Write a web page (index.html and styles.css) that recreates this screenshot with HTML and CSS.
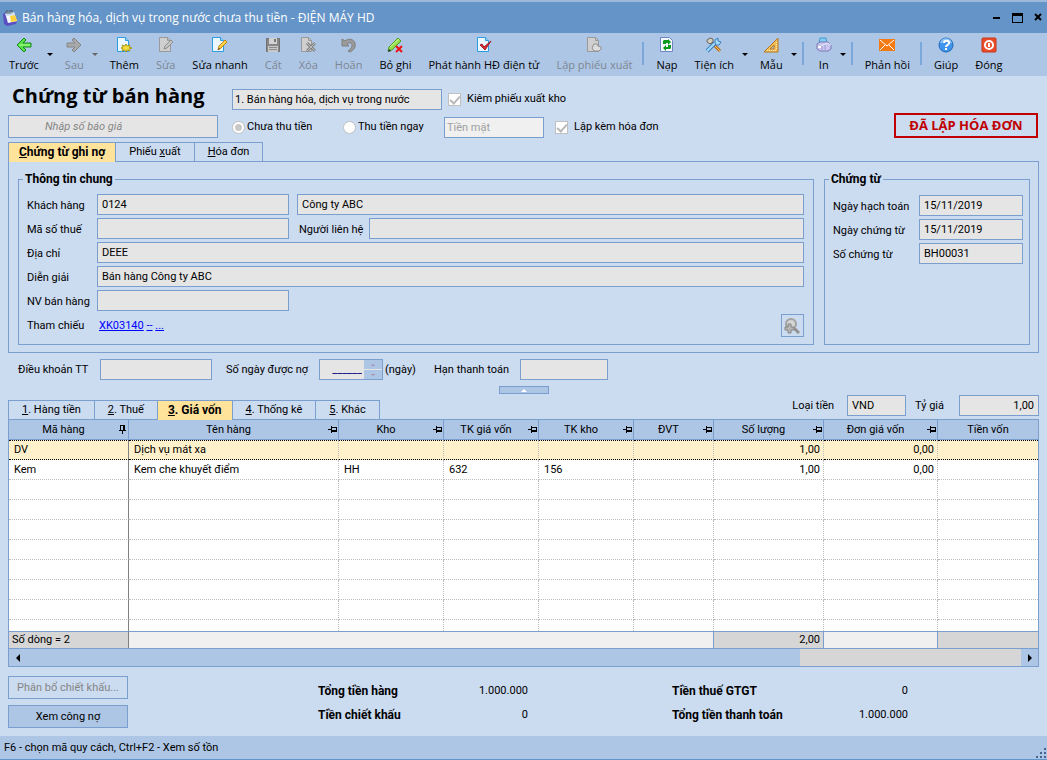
FILE: index.html
```html
<!DOCTYPE html>
<html lang="vi">
<head>
    <meta charset="UTF-8">
    <meta name="viewport" content="width=device-width, initial-scale=1.0">
    <title>Chứng từ bán hàng</title>
    <link rel="stylesheet" href="styles.css">
</head>
<body>
    <div class="top-strip"></div>

    <!-- Thanh tiêu đề -->
    <header class="titlebar">
        <svg class="app-icon" width="16" height="16" viewBox="0 0 16 16">
            <path d="M1 4l3-2 2 10 9-1-1 3-9 2-3-2z" fill="#5a4fc0"/>
            <path d="M3 3l9-1 3 9-9 2z" fill="#f4f8ff"/>
            <path d="M3 3l9-1 1 3-9 1z" fill="#c9ddf2"/>
            <path d="M8 6l5-1 2 6-6 1z" fill="#ffd23c"/>
            <path d="M4 4V1h2v3M8 4V0h2v3" fill="none" stroke="#55606e"/>
        </svg>
        <h1 class="window-title">Bán hàng hóa, dịch vụ trong nước chưa thu tiền - ĐIỆN MÁY HD</h1>
        <div class="window-buttons">
            <button type="button" aria-label="Thu nhỏ"><svg width="8" height="12" viewBox="0 0 8 12"><path d="M0 5h7v2H0z"/></svg></button>
            <button type="button" aria-label="Phóng to"><svg width="11" height="12" viewBox="0 0 11 12"><path d="M0 1h11v10H0zM1 4v6h9V4z" fill-rule="evenodd"/></svg></button>
            <button type="button" aria-label="Đóng cửa sổ"><svg width="8" height="12" viewBox="0 0 8 12"><path d="M1 2l6 6M7 2L1 8" stroke="#000" stroke-width="2"/></svg></button>
        </div>
    </header>

    <!-- Thanh công cụ -->
    <nav class="toolbar">
        <button type="button" class="tool">
            <svg width="16" height="16" viewBox="0 0 16 16"><path d="M8 1l2 2-3 3h8v4H7l3 3-2 2L1 8z" fill="#55e045" stroke="#178a1c" stroke-linejoin="round"/><path d="M3 8h11" stroke="#b7ff9c"/></svg>
            <span>Trước</span>
        </button>
        <button type="button" class="arrow" aria-label="Danh sách trước"></button>
        <button type="button" class="tool" disabled>
            <svg width="16" height="16" viewBox="0 0 16 16"><path d="M8 1L6 3l3 3H1v4h8l-3 3 2 2 7-7z" fill="#a9a9a9" stroke="#858585" stroke-linejoin="round"/></svg>
            <span>Sau</span>
        </button>
        <button type="button" class="arrow dim" aria-label="Danh sách sau"></button>
        <button type="button" class="tool">
            <svg width="16" height="16" viewBox="0 0 16 16"><path d="M1.500 .5h8l3 3v11h-11z" fill="#eaf7ff" stroke="#2c9be0"/><path d="M9.500 .5v3h3" fill="#9bd5f5" stroke="#2c9be0"/><path d="M10 7l1 2 3-1-1 2 3 1-3 1 1 2-3-1-1 2-1-2-3 1 1-2-2-1 2-1-1-2 3 1z" fill="#f1dd3c" stroke="#ac991d"/></svg>
            <span>Thêm</span>
        </button>
        <button type="button" class="tool" disabled>
            <svg width="16" height="16" viewBox="0 0 16 16"><path d="M1.500 .5h8l3 3v11h-11z" fill="#cfcfcf" stroke="#999"/><path d="M9.500 .5v3h3" fill="none" stroke="#999"/><path d="M6 12l1-3 6-6 2 2-6 6z" fill="#c4c4c4" stroke="#909090"/></svg>
            <span>Sửa</span>
        </button>
        <button type="button" class="tool">
            <svg width="16" height="16" viewBox="0 0 16 16"><path d="M.5 .5h8l3 3v11H.5z" fill="#eaf7ff" stroke="#2c9be0"/><path d="M8.500 .5v3h3" fill="#9bd5f5" stroke="#2c9be0"/><path d="M6 13l1-4 6-6 2 2-6 6z" fill="#ffd24a" stroke="#c18315"/><path d="M6 13l1-2 1 1z" fill="#333"/></svg>
            <span>Sửa nhanh</span>
        </button>
        <button type="button" class="tool" disabled>
            <svg width="16" height="16" viewBox="0 0 16 16"><path d="M1.500 1.500h13v13h-13z" fill="#878787" stroke="#707070"/><path d="M4 1h8v6H4z" fill="#d2d2d2"/><path d="M9 2h2v3H9z" fill="#777"/><path d="M3 9h10v6H3z" fill="#c8c8c8"/><path d="M4 10.500h8M4 12.500h8" stroke="#8d8d8d"/></svg>
            <span>Cất</span>
        </button>
        <button type="button" class="tool" disabled>
            <svg width="16" height="16" viewBox="0 0 16 16"><path d="M1.500 .5h7l3 3v11h-10z" fill="#cfcfcf" stroke="#999"/><path d="M8.500 .5v3h3" fill="none" stroke="#999"/><path d="M7 6l8 8M15 6l-8 8" stroke="#858585" stroke-width="3"/><path d="M7 6l8 8M15 6l-8 8" stroke="#bbb"/></svg>
            <span>Xóa</span>
        </button>
        <button type="button" class="tool" disabled>
            <svg width="16" height="16" viewBox="0 0 16 16"><path d="M1 2v7h7L6 7c2-2 5-1 5 1s-1 4-4 6l2 1c4-2 6-5 5-9S7 1 4 4z" fill="#9a9a9a" stroke="#7f7f7f"/></svg>
            <span>Hoãn</span>
        </button>
        <button type="button" class="tool">
            <svg width="16" height="16" viewBox="0 0 16 16"><path d="M1 14l1-4 9-9 3 3-9 9z" fill="#8fe04a" stroke="#4f9c20"/><path d="M3 10l9-8" stroke="#d2ff9c"/><path d="M1 15l1-3 2 2z" fill="#222"/><path d="M9 9l6 6M15 9l-6 6" stroke="#ee1111" stroke-width="2"/></svg>
            <span>Bỏ ghi</span>
        </button>
        <button type="button" class="tool">
            <svg width="16" height="16" viewBox="0 0 16 16"><path d="M1.500 .5h8l3 3v11h-11z" fill="#eaf7ff" stroke="#2c9be0"/><path d="M9.500 .5v3h3" fill="#9bd5f5" stroke="#2c9be0"/><path d="M4 8l2-1 2 3 7-6-6 9z" fill="#d92f35" stroke="#a51d28"/></svg>
            <span>Phát hành HĐ điện tử</span>
        </button>
        <button type="button" class="tool" disabled>
            <svg width="16" height="16" viewBox="0 0 16 16"><path d="M1.500 .5h8l3 3v11h-11z" fill="#cfcfcf" stroke="#999"/><path d="M9.500 .5v3h3" fill="none" stroke="#999"/><path d="M6 11l1-2 1-2h3l1 2 3 1v2l-2 2H8z" fill="#ddd" stroke="#909090"/></svg>
            <span>Lập phiếu xuất</span>
        </button>
        <span class="separator"></span>
        <button type="button" class="tool">
            <svg width="16" height="16" viewBox="0 0 16 16"><path d="M1.500 .5h9l3 3v11h-12z" fill="#f5f8ff" stroke="#6f86c4"/><path d="M4 7V4l1-1h4V2l3 3-3 3V6H7v1zM12 8v3l-1 1H7v2l-3-3 3-3v2h2V8z" fill="#0b9a1d"/></svg>
            <span>Nạp</span>
        </button>
        <button type="button" class="tool">
            <svg width="16" height="16" viewBox="0 0 16 16"><path d="M5 5l9 9" stroke="#b86b19" stroke-width="3"/><path d="M5 5l9 9" stroke="#ffc56b"/><path d="M1 14l8-8" stroke="#367ebc" stroke-width="4"/><path d="M1 14l8-8" stroke="#a5dcff" stroke-width="2"/><path d="M9 6V3l3-2v3l3 1-2 3h-3z" fill="#a5dcff" stroke="#367ebc"/><path d="M1 5V3l3-2 3 1v3L4 7z" fill="#d5cdbd" stroke="#666"/></svg>
            <span>Tiện ích</span>
        </button>
        <button type="button" class="arrow" aria-label="Chọn tiện ích"></button>
        <button type="button" class="tool">
            <svg width="16" height="16" viewBox="0 0 16 16"><path d="M15 1v14H1zM11 8v4H7z" fill="#f2bd59" fill-rule="evenodd" stroke="#b47822"/><path d="M13.500 5v8M4 13.500h9" stroke="#fff0b0" stroke-dasharray="1 1"/></svg>
            <span>Mẫu</span>
        </button>
        <button type="button" class="arrow" aria-label="Chọn mẫu"></button>
        <span class="separator"></span>
        <button type="button" class="tool">
            <svg width="16" height="16" viewBox="0 0 16 16"><path d="M3 6l1-5h6l1 5z" fill="#7fcdf2" stroke="#4a98c8"/><path d="M1 7l3-2h8l3 3v4l-3 2H4l-3-2z" fill="#c8c5ef" stroke="#7b78b5" stroke-linejoin="round"/><path d="M5 9l6-3 4 2" fill="none" stroke="#e8e6ff"/><path d="M6 9v4M9 8v5" stroke="#9f9cd2"/><path d="M2 9h3v2H2z" fill="#fff"/></svg>
            <span>In</span>
        </button>
        <button type="button" class="arrow" aria-label="Chọn cách in"></button>
        <span class="separator"></span>
        <button type="button" class="tool">
            <svg width="16" height="16" viewBox="0 0 16 16"><path d="M0 2h16v12H0z" fill="#f47a13"/><path d="M1 3l7 6 7-6M1 13l5-5M15 13l-5-5" fill="none" stroke="#fff"/></svg>
            <span>Phản hồi</span>
        </button>
        <span class="separator"></span>
        <button type="button" class="tool">
            <svg width="16" height="16" viewBox="0 0 16 16"><circle cx="8" cy="8" r="7" fill="#3f94ec" stroke="#1f68b8"/><path d="M3 6c2-5 8-5 10 0" fill="none" stroke="#8cc4ff" stroke-width="2"/><path d="M6 6c0-3 5-3 5 0 0 2-3 2-3 4" fill="none" stroke="#fff" stroke-width="2"/><path d="M7 11h2v2H7z" fill="#fff"/></svg>
            <span>Giúp</span>
        </button>
        <button type="button" class="tool">
            <svg width="16" height="16" viewBox="0 0 16 16"><rect x="1" y="1" width="14" height="14" rx="1" fill="#ea4c29" stroke="#c93718"/><circle cx="8" cy="8" r="4" fill="none" stroke="#fff" stroke-width="2"/><path d="M8 6v4" stroke="#fff" stroke-width="2"/></svg>
            <span>Đóng</span>
        </button>
    </nav>

    <main class="content">
        <!-- Đầu chứng từ -->
        <section class="doc-head">
            <div class="doc-left">
                <h2>Chứng từ bán hàng</h2>
                <input type="text" class="box quote" placeholder="Nhập số báo giá" aria-label="Số báo giá" readonly>
            </div>
            <div class="doc-options">
                <div class="option-row">
                    <input type="text" class="box kind" value="1. Bán hàng hóa, dịch vụ trong nước" aria-label="Loại chứng từ" readonly>
                    <label class="choice"><input type="checkbox" checked disabled>Kiêm phiếu xuất kho</label>
                </div>
                <div class="option-row">
                    <label class="choice pay"><input type="radio" name="pay" checked disabled>Chưa thu tiền</label>
                    <label class="choice pay"><input type="radio" name="pay" disabled>Thu tiền ngay</label>
                    <input type="text" class="box method" value="Tiền mặt" aria-label="Hình thức thanh toán" disabled>
                    <label class="choice"><input type="checkbox" checked disabled>Lập kèm hóa đơn</label>
                </div>
            </div>
            <strong class="stamp">ĐÃ LẬP HÓA ĐƠN</strong>
        </section>

        <div class="tabs" role="tablist">
            <button type="button" role="tab" class="tab active" aria-selected="true"><u>C</u>hứng từ ghi nợ</button>
            <button type="button" role="tab" class="tab">Phiếu <u>x</u>uất</button>
            <button type="button" role="tab" class="tab"><u>H</u>óa đơn</button>
        </div>

        <section class="panel">
            <fieldset class="general">
                <legend>Thông tin chung</legend>
                <div class="field-row">
                    <label for="customer">Khách hàng</label>
                    <input type="text" id="customer" class="box short" value="0124" readonly>
                    <input type="text" class="box grow" value="Công ty ABC" aria-label="Tên khách hàng" readonly>
                </div>
                <div class="field-row">
                    <label for="tax">Mã số thuế</label>
                    <input type="text" id="tax" class="box short" readonly>
                    <label for="contact" class="contact">Người liên hệ</label>
                    <input type="text" id="contact" class="box grow" readonly>
                </div>
                <div class="field-row">
                    <label for="address">Địa chỉ</label>
                    <input type="text" id="address" class="box grow" value="DEEE" readonly>
                </div>
                <div class="field-row">
                    <label for="note">Diễn giải</label>
                    <input type="text" id="note" class="box grow" value="Bán hàng Công ty ABC" readonly>
                </div>
                <div class="field-row">
                    <label for="seller">NV bán hàng</label>
                    <input type="text" id="seller" class="box short" readonly>
                </div>
                <div class="field-row reference">
                    <span class="caption">Tham chiếu</span>
                    <span class="links"><a href="#">XK03140</a> <a href="#">--</a> <a href="#">...</a></span>
                    <button type="button" class="search" aria-label="Tìm chứng từ" disabled>
                        <svg width="16" height="16" viewBox="0 0 16 16"><path d="M10 10l5 5" stroke="#929292" stroke-width="3"/><circle cx="7" cy="6" r="5" fill="#d4d4d4" stroke="#a2a2a2" stroke-width="2"/><path d="M4 6h3v3h3v3H7v3H4v-3H1V9h3z" fill="#b5b5b5" stroke="#858585"/></svg>
                    </button>
                </div>
            </fieldset>
            <fieldset class="voucher">
                <legend>Chứng từ</legend>
                <div class="field-row">
                    <label for="post-date">Ngày hạch toán</label>
                    <input type="text" id="post-date" class="box grow" value="15/11/2019" readonly>
                </div>
                <div class="field-row">
                    <label for="doc-date">Ngày chứng từ</label>
                    <input type="text" id="doc-date" class="box grow" value="15/11/2019" readonly>
                </div>
                <div class="field-row">
                    <label for="doc-no">Số chứng từ</label>
                    <input type="text" id="doc-no" class="box grow" value="BH00031" readonly>
                </div>
            </fieldset>
        </section>

        <!-- Điều khoản thanh toán -->
        <section class="terms">
            <label for="terms" class="terms-label">Điều khoản TT</label>
            <input type="text" id="terms" class="box term-box" readonly>
            <label for="days" class="days-label">Số ngày được nợ</label>
            <span class="spinner">
                <input type="text" id="days" value="______" readonly>
                <span class="spin-buttons">
                    <button type="button" aria-label="Tăng" disabled></button>
                    <button type="button" class="down" aria-label="Giảm" disabled></button>
                </span>
            </span>
            <span class="unit">(ngày)</span>
            <label for="due" class="due-label">Hạn thanh toán</label>
            <input type="text" id="due" class="box due-box" readonly>
        </section>
        <button type="button" class="collapse" aria-label="Thu gọn"></button>

        <div class="detail-head">
            <div class="tabs" role="tablist">
                <button type="button" role="tab" class="tab"><u>1</u>. Hàng tiền</button>
                <button type="button" role="tab" class="tab"><u>2</u>. Thuế</button>
                <button type="button" role="tab" class="tab active" aria-selected="true"><u>3</u>. Giá vốn</button>
                <button type="button" role="tab" class="tab"><u>4</u>. Thống kê</button>
                <button type="button" role="tab" class="tab"><u>5</u>. Khác</button>
            </div>
            <div class="currency">
                <label for="currency">Loại tiền</label>
                <input type="text" id="currency" class="box cur-box" value="VND" readonly>
                <label for="rate">Tỷ giá</label>
                <input type="text" id="rate" class="box rate-box" value="1,00" readonly>
            </div>
        </div>

        <!-- Bảng chi tiết -->
        <section class="grid">
            <svg class="symbols" width="0" height="0">
                <symbol id="pin" viewBox="0 0 9 9"><path d="M0 4h3v1H0zM3 1h1v7H3zM4 2h5v1H4zM8 2h1v5H8zM4 5h5v2H4z"/></symbol>
                <symbol id="pinned" viewBox="0 0 9 9"><path d="M2 0h5v1H2zM2 0h1v5H2zM5 0h2v5H5zM1 5h7v1H1zM4 6h1v3H4z"/></symbol>
            </svg>
            <div class="grid-body">
                <table>
                    <colgroup>
                        <col class="c-code"><col class="c-name"><col class="c-store"><col class="c-acc"><col class="c-acc">
                        <col class="c-unit"><col class="c-qty"><col class="c-price"><col>
                    </colgroup>
                    <thead>
                        <tr>
                            <th><div>Mã hàng<svg width="9" height="9"><use href="#pinned"/></svg></div></th>
                            <th><div>Tên hàng<svg width="9" height="9"><use href="#pin"/></svg></div></th>
                            <th><div>Kho<svg width="9" height="9"><use href="#pin"/></svg></div></th>
                            <th><div>TK giá vốn<svg width="9" height="9"><use href="#pin"/></svg></div></th>
                            <th><div>TK kho<svg width="9" height="9"><use href="#pin"/></svg></div></th>
                            <th><div>ĐVT<svg width="9" height="9"><use href="#pin"/></svg></div></th>
                            <th><div>Số lượng<svg width="9" height="9"><use href="#pin"/></svg></div></th>
                            <th><div>Đơn giá vốn<svg width="9" height="9"><use href="#pin"/></svg></div></th>
                            <th>Tiền vốn</th>
                        </tr>
                    </thead>
                    <tbody>
                        <tr class="selected"><td>DV</td><td>Dịch vụ mát xa</td><td></td><td></td><td></td><td></td><td class="num">1,00</td><td class="num">0,00</td><td></td></tr>
                        <tr><td>Kem</td><td>Kem che khuyết điểm</td><td>HH</td><td>632</td><td>156</td><td></td><td class="num">1,00</td><td class="num">0,00</td><td></td></tr>
                        <tr><td></td><td></td><td></td><td></td><td></td><td></td><td></td><td></td><td></td></tr>
                        <tr><td></td><td></td><td></td><td></td><td></td><td></td><td></td><td></td><td></td></tr>
                        <tr><td></td><td></td><td></td><td></td><td></td><td></td><td></td><td></td><td></td></tr>
                        <tr><td></td><td></td><td></td><td></td><td></td><td></td><td></td><td></td><td></td></tr>
                        <tr><td></td><td></td><td></td><td></td><td></td><td></td><td></td><td></td><td></td></tr>
                        <tr><td></td><td></td><td></td><td></td><td></td><td></td><td></td><td></td><td></td></tr>
                        <tr><td></td><td></td><td></td><td></td><td></td><td></td><td></td><td></td><td></td></tr>
                        <tr class="rest"><td></td><td></td><td></td><td></td><td></td><td></td><td></td><td></td><td></td></tr>
                    </tbody>
                    <tfoot>
                        <tr><td class="sum">Số dòng = 2</td><td colspan="5"></td><td class="sum num">2,00</td><td></td><td class="sum"></td></tr>
                    </tfoot>
                </table>
            </div>
            <div class="scrollbar">
                <button type="button" class="scroll-left" aria-label="Cuộn trái"></button>
                <div class="thumb"></div>
                <div class="track"></div>
                <button type="button" class="scroll-right" aria-label="Cuộn phải"></button>
            </div>
        </section>

        <section class="summary">
            <div class="actions">
                <button type="button" disabled>Phân bổ chiết khấu...</button>
                <button type="button">Xem công nợ</button>
            </div>
            <dl class="totals">
                <dt>Tổng tiền hàng</dt><dd>1.000.000</dd>
                <dt>Tiền chiết khấu</dt><dd>0</dd>
            </dl>
            <dl class="totals wide">
                <dt>Tiền thuế GTGT</dt><dd>0</dd>
                <dt>Tổng tiền thanh toán</dt><dd>1.000.000</dd>
            </dl>
        </section>
    </main>

    <footer class="statusbar">
        <span>F6 - chọn mã quy cách, Ctrl+F2 - Xem số tồn</span>
        <svg width="11" height="11" viewBox="0 0 11 11"><path d="M8 0h2v2H8zM4 4h2v2H4zM8 4h2v2H8zM0 8h2v2H0zM4 8h2v2H4zM8 8h2v2H8z" fill="#46648f"/></svg>
    </footer>
</body>
</html>
```
FILE: styles.css
```css
* {
    box-sizing: border-box;
}

body {
    margin: 0;
    min-height: 100vh;
    display: flex;
    flex-direction: column;
    background-color: #cbdbf0;
    color: #000;
    font-family: Roboto, "Liberation Sans", sans-serif;
    font-size: 11px;
    line-height: 16px;
}

button,
input {
    font: inherit;
    color: inherit;
    margin: 0;
    padding: 0;
    border: none;
    border-radius: 0;
    background: none;
}

/* Thanh tiêu đề */
.top-strip {
    height: 2px;
    background-color: #9db8da;
}

.titlebar {
    height: 31px;
    padding: 0 5px 0 2px;
    display: flex;
    align-items: center;
    background-color: #6595c8;
}

.window-title {
    margin: 0 0 0 4px;
    font: 12px/16px "Open Sans", "Noto Sans", sans-serif;
    color: #fff;
}

.window-buttons {
    margin-left: auto;
    display: flex;
    gap: 11px;
}

.window-buttons svg,
.tool svg,
.search svg {
    display: block;
}

/* Thanh công cụ */
.toolbar {
    height: 43px;
    display: flex;
    background-color: #adc6e5;
    font-family: "Open Sans", "Noto Sans", sans-serif;
    white-space: nowrap;
}

.tool {
    padding: 4px 8px 0 9px;
    display: flex;
    flex-direction: column;
    align-items: center;
    gap: 4px;
}

.tool:disabled {
    color: #7d8794;
}

.arrow {
    width: 9px;
    display: flex;
    align-items: center;
}

.arrow::before {
    content: "";
    border: 3px solid transparent;
    border-top-color: #000;
    border-bottom: none;
}

.arrow.dim::before {
    border-top-color: #666;
}

.separator {
    width: 2px;
    height: 23px;
    margin: 9px 3px 0 2px;
    background-color: #7ba7da;
}

/* Nội dung */
.content {
    flex: 1;
    padding: 0 8px 8px;
    display: flex;
    flex-direction: column;
}

.box {
    height: 21px;
    padding: 0 4px;
    border: 1px solid #7a9fcf;
    background-color: #e5e5e5;
    min-width: 0;
}

.grow {
    flex: 1;
}

.doc-head {
    display: flex;
    align-items: flex-end;
    gap: 14px;
    padding: 6px 0 1px;
}

.doc-left {
    width: 210px;
    margin-bottom: 3px;
}

.doc-left h2 {
    margin: 0 4px 5px;
    font: bold 20px/28px "Open Sans", "Noto Sans", sans-serif;
    white-space: nowrap;
}

.quote {
    display: block;
    width: 100%;
    height: 23px;
    padding-left: 36px;
}

.quote::placeholder {
    color: #858585;
    font-style: italic;
}

.option-row {
    height: 28px;
    display: flex;
    align-items: center;
}

.kind {
    width: 210px;
    margin-right: 6px;
    padding-left: 2px;
}

.choice {
    display: flex;
    align-items: center;
    gap: 6px;
    white-space: nowrap;
}

.pay {
    width: 111px;
    gap: 2px;
}

.choice input {
    appearance: none;
    width: 13px;
    height: 13px;
    border: 1px solid #c0c0c0;
    background-color: #fff;
    display: grid;
    place-items: center;
}

.choice input[type="checkbox"]:checked::after {
    content: "";
    width: 4px;
    height: 8px;
    margin-bottom: 3px;
    border: solid #b8b8b8;
    border-width: 0 2px 2px 0;
    transform: rotate(42deg);
}

.choice input[type="radio"] {
    border-radius: 50%;
}

.choice input[type="radio"]:checked::after {
    content: "";
    width: 7px;
    height: 7px;
    border-radius: 50%;
    background-color: #c8c8c8;
}

.method {
    width: 100px;
    margin: 0 11px 0 -10px;
    padding-left: 2px;
    background-color: #f0f0f0;
    color: #a0a0a0;
}

.stamp {
    width: 144px;
    margin: 0 1px 3px auto;
    border: 2px solid #c00000;
    color: #c00000;
    font: bold 13px/21px "Open Sans", "Noto Sans", sans-serif;
    text-align: center;
    white-space: nowrap;
}

/* Thẻ */
.tabs {
    height: 19px;
    display: flex;
}

.tab {
    height: 19px;
    padding: 0 13px;
    border: 1px solid #7a9fcf;
    border-width: 1px 1px 0 0;
    white-space: nowrap;
}

.tab:first-child {
    border-left-width: 1px;
}

.tab.active {
    position: relative;
    height: 20px;
    padding: 0 10px 2px;
    background-color: #ffe39b;
    font-size: 12px;
    font-weight: bold;
}

.panel {
    display: flex;
    gap: 10px;
    padding: 9px 8px 7px 9px;
    border: 1px solid #7a9fcf;
}

fieldset {
    margin: 0;
    min-width: 0;
    border: 1px solid #7a9fcf;
}

legend {
    padding: 0 2px;
    margin-left: -4px;
    font-size: 12px;
    font-weight: bold;
}

.general {
    flex: 1;
    padding: 7px 9px 7px 8px;
}

.voucher {
    width: 206px;
    padding: 8px 6px 0 8px;
}

.field-row {
    display: flex;
    align-items: center;
    gap: 8px;
    margin-bottom: 3px;
    white-space: nowrap;
}

.field-row label {
    padding-top: 2px;
}

.field-row label:first-child,
.caption {
    width: 70px;
    margin-right: -8px;
}

.voucher .field-row label:first-child {
    width: 86px;
}

.short {
    width: 192px;
}

.field-row .contact {
    width: 72px;
    margin-right: -8px;
    padding-left: 2px;
}

.reference {
    margin: 0;
}

.links {
    padding-left: 2px;
}

.links a {
    color: #0000ff;
}

.search {
    width: 23px;
    height: 23px;
    margin-left: auto;
    padding: 2px;
    border: 1px solid #7a9fcf;
}

.terms {
    display: flex;
    align-items: center;
    padding: 6px 10px;
    white-space: nowrap;
}

.terms-label {
    width: 82px;
}

.term-box {
    width: 112px;
    margin-right: 14px;
}

.days-label {
    width: 93px;
}

.spinner {
    width: 64px;
    height: 21px;
    display: flex;
    border: 1px solid #7a9fcf;
    background-color: #e5e5e5;
}

.spinner input {
    flex: 1;
    min-width: 0;
    padding-right: 2px;
    color: #000080;
    text-align: right;
}

.spin-buttons {
    width: 18px;
    display: grid;
    gap: 1px;
}

.spin-buttons button {
    display: grid;
    place-items: center;
    background-color: #adc6e5;
}

.spin-buttons button::before {
    content: "";
    border: 2px solid transparent;
    border-top: none;
    border-bottom-color: #a88da8;
}

.spin-buttons .down::before {
    border-top: 2px solid #a88da8;
    border-bottom: none;
}

.unit {
    width: 51px;
    padding-left: 2px;
}

.due-label {
    width: 86px;
}

.due-box {
    width: 88px;
}

.collapse {
    width: 50px;
    height: 8px;
    align-self: center;
    display: grid;
    place-items: center;
    border: 1px solid #7a9fcf;
    background-color: #adc6e5;
}

.collapse::before {
    content: "";
    border: 3px solid transparent;
    border-top: none;
    border-bottom-color: #fff;
}

.detail-head {
    display: flex;
    justify-content: space-between;
    align-items: flex-end;
    padding-top: 1px;
    white-space: nowrap;
}

.currency {
    display: flex;
    align-items: center;
    padding-bottom: 3px;
}

.cur-box {
    width: 59px;
    margin: 0 9px 0 13px;
}

.rate-box {
    width: 80px;
    margin-left: 15px;
    text-align: right;
}

/* Bảng chi tiết */
.grid {
    flex: 1;
    display: flex;
    flex-direction: column;
    border: 1px solid #7a9fcf;
    background-color: #fff;
}

.symbols {
    position: absolute;
}

.grid-body {
    flex: 1;
    display: flex;
}

table {
    width: 100%;
    table-layout: fixed;
    border-collapse: separate;
    border-spacing: 0;
}

.c-code { width: 120px; }
.c-name { width: 210px; }
.c-store { width: 105px; }
.c-acc { width: 95px; }
.c-unit { width: 80px; }
.c-qty { width: 110px; }
.c-price { width: 114px; }

th {
    height: 20px;
    padding: 0;
    border-right: 1px solid #7a9fcf;
    border-bottom: 1px solid #7a9fcf;
    background-color: #adc6e5;
    font-weight: normal;
}

th:last-child {
    border-right: none;
}

th div {
    display: grid;
    grid-template-columns: 1fr 10px;
    align-items: center;
}

td {
    height: 20px;
    padding: 0 5px;
    border-right: 1px dotted #bdbdbd;
    border-bottom: 1px dotted #bdbdbd;
    white-space: nowrap;
    line-height: 16px;
}

td:first-child {
    border-right: 1px solid #808080;
}

td:last-child {
    border-right: none;
}

.num {
    padding-right: 3px;
    text-align: right;
}

.selected td {
    border-top: 1px dotted #000;
    border-bottom-color: #000;
    background-color: #fff1cb;
}

.rest td {
    height: auto;
    border-bottom: none;
}

tfoot td {
    height: 17px;
    padding: 0 3px;
    border-top: 1px solid #7a9fcf;
    border-right: 1px solid #7a9fcf;
    border-bottom: none;
    background-color: #f0f0f0;
}

tfoot .sum {
    background-color: #d6d6d6;
}

.scrollbar {
    height: 18px;
    display: flex;
    border-top: 1px solid #7a9fcf;
    background-color: #adc6e5;
}

.scrollbar button {
    width: 17px;
    display: grid;
    place-items: center;
}

.scrollbar button::before {
    content: "";
    border: 4px solid transparent;
}

.scrollbar .scroll-left::before {
    border-left: none;
    border-right-color: #000;
}

.scrollbar .scroll-right::before {
    border-right: none;
    border-left-color: #000;
}

.thumb {
    flex: 7;
}

.track {
    flex: 2;
    background-color: #d6d6d6;
}

/* Tổng cộng */
.summary {
    display: flex;
    padding-top: 9px;
}

.actions {
    width: 120px;
    display: flex;
    flex-direction: column;
    gap: 6px;
    margin-right: 190px;
}

.actions button {
    height: 23px;
    border: 1px solid #7a9fcf;
    background-color: #adc6e5;
    white-space: nowrap;
}

.actions button:disabled {
    background: none;
    color: #858585;
}

.totals {
    width: 210px;
    margin: 3px 144px 0 0;
    display: grid;
    grid-template-columns: auto auto;
    align-content: start;
    line-height: 24px;
    white-space: nowrap;
}

.totals.wide {
    width: 236px;
    margin-right: 0;
}

.totals dt {
    font-size: 12px;
    font-weight: bold;
}

.totals dd {
    margin: 0;
    text-align: right;
}

.statusbar {
    height: 24px;
    padding-left: 4px;
    display: flex;
    align-items: center;
    justify-content: space-between;
    border-bottom: 1px solid #5f95cc;
    background-color: #adc6e5;
}

.statusbar svg {
    align-self: flex-end;
}
```
